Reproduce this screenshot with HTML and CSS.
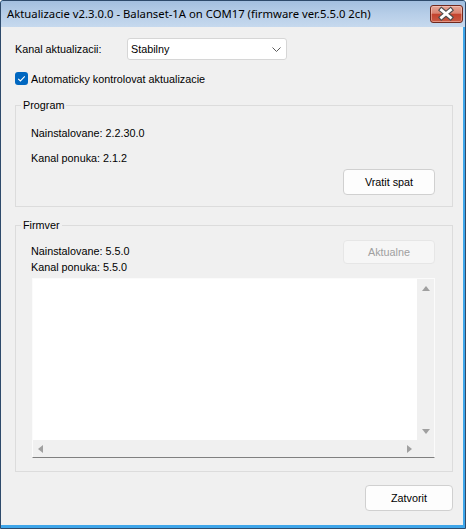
FILE: index.html
```html
<!DOCTYPE html>
<html lang="sk">
<head>
<meta charset="utf-8">
<title>Aktualizacie</title>
<link rel="stylesheet" href="styles.css">
</head>
<body>
<div class="window">
  <div class="titlebar">
    <span class="title">Aktualizacie v2.3.0.0 - Balanset-1A on COM17 (firmware ver.5.5.0 2ch)</span>
    <button class="close" aria-label="Zavriet">
      <svg width="31" height="16" viewBox="0 0 31 16">
        <path d="M10.5 4 L19.5 11.5 M19.5 4 L10.5 11.5" stroke="#4d4d4d" stroke-width="5" stroke-linecap="square" fill="none"/>
        <path d="M10.5 4 L19.5 11.5 M19.5 4 L10.5 11.5" stroke="#ffffff" stroke-width="2.8" stroke-linecap="square" fill="none"/>
      </svg>
    </button>
  </div>
  <div class="client">
    <div class="row-channel">
      <span class="lbl">Kanal aktualizacii:</span>
      <div class="combo">
        <span>Stabilny</span>
        <svg class="chevron" width="9" height="5" viewBox="0 0 9 5"><polyline points="0.5,0.5 4.5,4.5 8.5,0.5" fill="none" stroke="#5a5a5a" stroke-width="1"/></svg>
      </div>
    </div>
    <div class="check-row">
      <span class="checkbox">
        <svg width="13" height="13" viewBox="0 0 13 13"><polyline points="3.2,6.8 5.4,8.9 9.8,4.4" fill="none" stroke="#ffffff" stroke-width="1.1"/></svg>
      </span>
      <span class="check-label">Automaticky kontrolovat aktualizacie</span>
    </div>
    <fieldset class="group group-program">
      <legend>Program</legend>
      <div class="group-body program-body">
        <div class="line">Nainstalovane: 2.2.30.0</div>
        <div class="line line-second">Kanal ponuka: 2.1.2</div>
        <div class="actions"><button class="btn btn-wide">Vratit spat</button></div>
      </div>
    </fieldset>
    <fieldset class="group group-fw">
      <legend>Firmver</legend>
      <div class="group-body fw-body">
        <div class="fw-head">
          <div class="fw-info">
            <div class="line">Nainstalovane: 5.5.0</div>
            <div class="line fw-line2">Kanal ponuka: 5.5.0</div>
          </div>
          <button class="btn btn-wide btn-disabled" disabled>Aktualne</button>
        </div>
        <div class="textbox">
          <div class="tb-content"></div>
          <div class="vscroll"><span class="tri tri-up"></span><span class="tri tri-down"></span></div>
          <div class="hscroll"><span class="tri tri-left"></span><span class="tri tri-right"></span></div>
          <div class="corner"></div>
        </div>
      </div>
    </fieldset>
    <div class="footer"><button class="btn btn-close">Zatvorit</button></div>
  </div>
</div>
</body>
</html>
```
FILE: styles.css
```css
html, body {
  margin: 0;
  padding: 0;
  background: #ffffff;
}

.window {
  width: 466px;
  height: 529px;
  box-sizing: border-box;
  border: 1px solid #2e4a6b;
  border-radius: 3px 3px 0 0;
  background: #3ea6ea;
  display: flex;
  flex-direction: column;
  overflow: hidden;
}

.titlebar {
  height: 26px;
  flex: none;
  display: flex;
  align-items: flex-start;
  background: linear-gradient(to bottom, #a3bfdf 0%, #b7cee8 50%, #c6d9ee 100%);
}

.title {
  font-family: "Noto Sans", "Open Sans", sans-serif;
  font-size: 11.3px;
  line-height: 16px;
  color: #000000;
  margin: 5px 0 0 6px;
  white-space: nowrap;
}

.close {
  margin: 4px 2px 0 auto;
  width: 33px;
  height: 18px;
  padding: 0;
  border: 1px solid #70281c;
  border-radius: 3px;
  background: linear-gradient(to bottom, #e6a595 0%, #d98371 45%, #c4432e 52%, #c95a44 100%);
  box-shadow: inset 0 0 0 1px rgba(255, 220, 210, 0.45);
  display: flex;
  align-items: center;
  justify-content: center;
}

.close svg {
  display: block;
}

.client {
  flex: 1;
  margin: 0 2px 3px 0;
  background: #f0f0f0;
  padding: 11px 10px 0 14px;
  display: flex;
  flex-direction: column;
  font-family: "Liberation Sans", Arial, sans-serif;
  font-size: 10.8px;
  color: #000000;
}

.row-channel {
  display: flex;
  align-items: center;
  height: 22px;
}

.lbl {
  width: 112px;
}

.combo {
  width: 160px;
  height: 22px;
  box-sizing: border-box;
  border: 1px solid #d6d6d6;
  border-radius: 3px;
  background: #ffffff;
  padding-left: 3px;
  display: flex;
  align-items: center;
}

.chevron {
  margin-left: auto;
  margin-right: 5px;
  margin-top: 1px;
}

.check-row {
  display: flex;
  align-items: center;
  margin-top: 12px;
  height: 13px;
}

.checkbox {
  width: 13px;
  height: 13px;
  border-radius: 3px;
  background: #0067c0;
  display: block;
}

.checkbox svg {
  display: block;
}

.check-label {
  margin-left: 3px;
}

.group {
  margin: 0;
  padding: 0;
  min-width: 0;
  border: 1px solid #dcdcdc;
}

.group legend {
  margin-left: 5px;
  padding: 0 2px;
  line-height: 14px;
  font-size: 10.8px;
}

.group-program {
  margin-top: 13px;
}

.group-fw {
  margin-top: 11px;
}

.line {
  line-height: 14px;
  height: 14px;
}

.program-body {
  padding: 14px 17px 11px 15px;
}

.line-second {
  margin-top: 11px;
}

.actions {
  display: flex;
  justify-content: flex-end;
  margin-top: 4px;
}

.btn {
  font-family: "Liberation Sans", Arial, sans-serif;
  font-size: 10.8px;
  color: #000000;
  background: #fdfdfd;
  border: 1px solid #d0d0d0;
  border-radius: 4px;
  padding: 0;
}

.btn-wide {
  width: 92px;
  height: 26px;
}

.fw-body {
  padding: 8px 17px 13px 15px;
}

.fw-head {
  display: flex;
  justify-content: space-between;
  align-items: flex-start;
}

.fw-info {
  padding-top: 4px;
}

.fw-line2 {
  margin-top: 2px;
}

.btn-disabled {
  height: 24px;
  background: #f6f6f6;
  border-color: #e6e6e6;
  color: #a0a0a0;
}

.textbox {
  margin: 4px 0 0 1px;
  width: 403px;
  height: 180px;
  box-sizing: border-box;
  border: 1px solid #fbfbfb;
  border-bottom-color: #808080;
  display: grid;
  grid-template-columns: 1fr 17px;
  grid-template-rows: 1fr 17px;
  background: #f0f0f0;
}

.tb-content {
  background: #ffffff;
}

.vscroll {
  background: #f0f0f0;
  display: flex;
  flex-direction: column;
  justify-content: space-between;
  align-items: center;
  padding: 7px 0 6px;
}

.hscroll {
  background: #f0f0f0;
  display: flex;
  justify-content: space-between;
  align-items: center;
  padding: 0 5px;
}

.corner {
  background: #f0f0f0;
}

.tri {
  display: block;
  width: 0;
  height: 0;
}

.tri-up {
  border-left: 4.5px solid transparent;
  border-right: 4.5px solid transparent;
  border-bottom: 5px solid #a0a0a0;
}

.tri-down {
  border-left: 4.5px solid transparent;
  border-right: 4.5px solid transparent;
  border-top: 5px solid #a0a0a0;
}

.tri-left {
  border-top: 4.5px solid transparent;
  border-bottom: 4.5px solid transparent;
  border-right: 5px solid #a0a0a0;
}

.tri-right {
  border-top: 4.5px solid transparent;
  border-bottom: 4.5px solid transparent;
  border-left: 5px solid #a0a0a0;
}

.footer {
  display: flex;
  justify-content: flex-end;
  margin-top: 13px;
}

.btn-close {
  width: 88px;
  height: 26px;
}
```
